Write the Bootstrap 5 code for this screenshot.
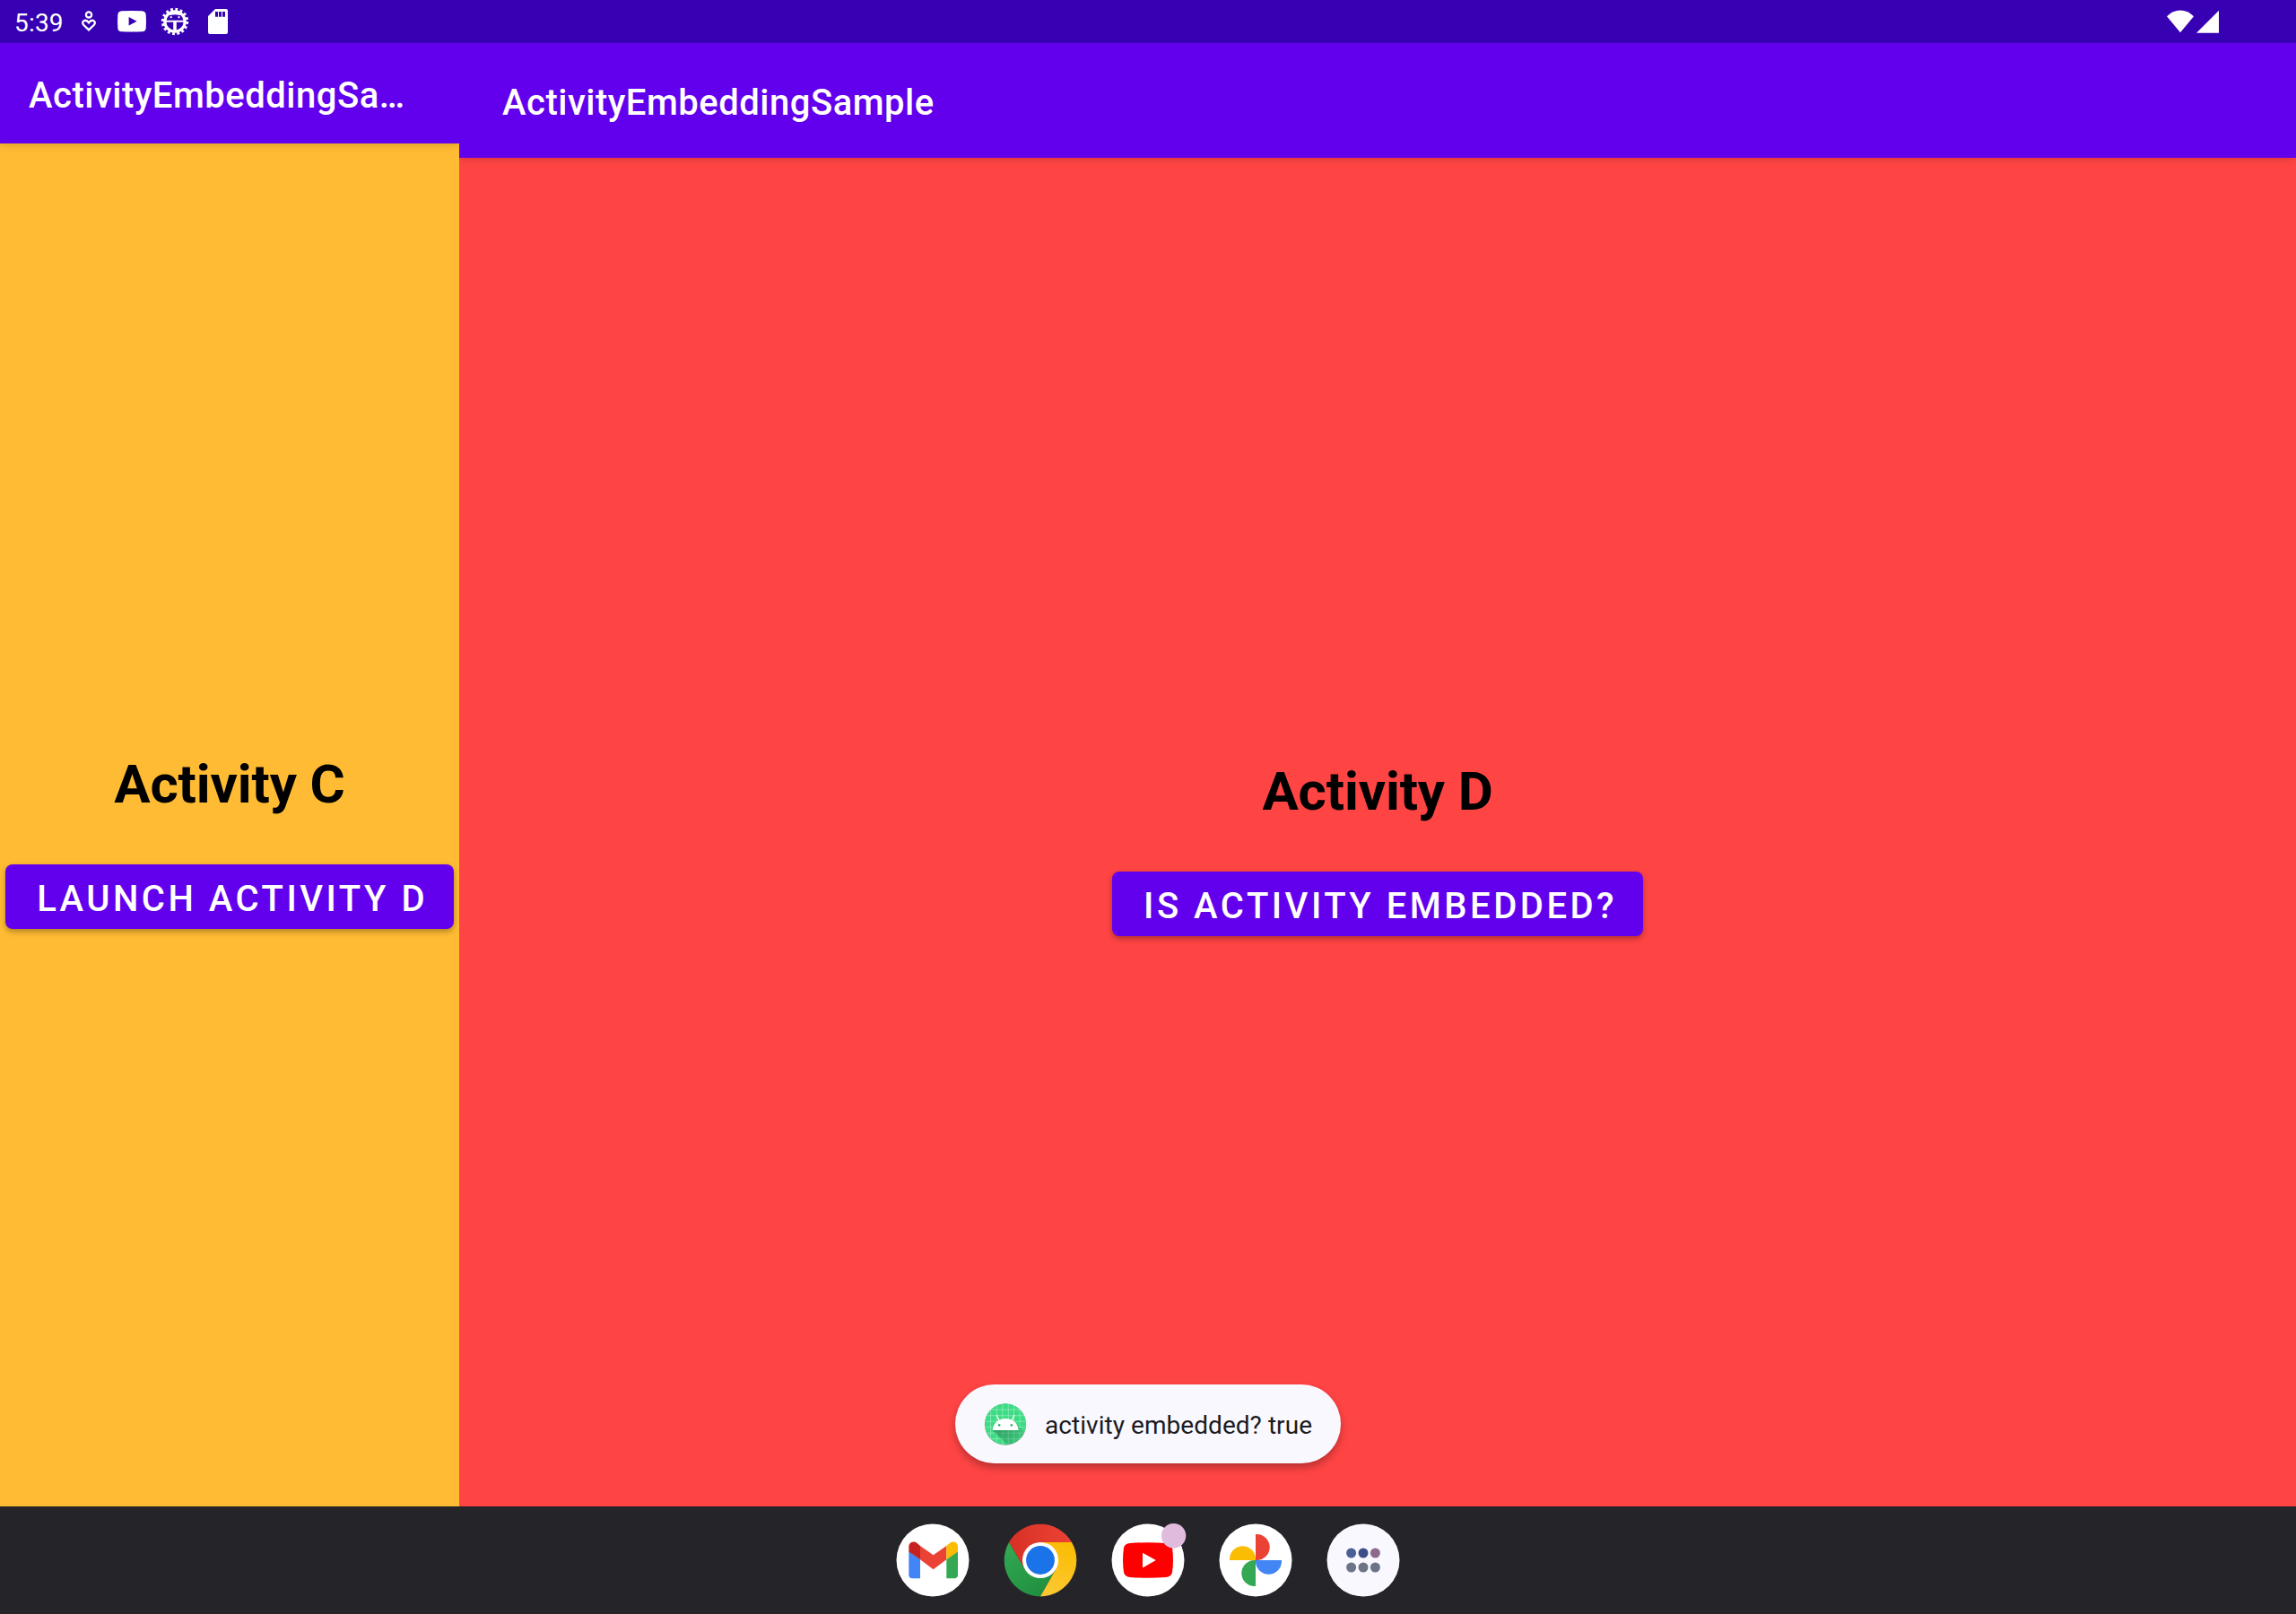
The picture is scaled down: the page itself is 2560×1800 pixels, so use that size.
<!DOCTYPE html>
<html lang="en">
<head>
<meta charset="utf-8">
<title>ActivityEmbeddingSample</title>
<meta name="viewport" content="width=device-width, initial-scale=1">
<link rel="stylesheet" href="https://cdn.jsdelivr.net/npm/bootstrap@5.3.0/dist/css/bootstrap.min.css">
<style>
body { font-family: Roboto, "Noto Sans", sans-serif; background: #252429; }
svg { display: block; flex: none; overflow: visible; }
.status-bar { height: 48px; background: #3700b3; padding: 0 86px 0 16px; color: #fff; }
.clock { width: 59px; font-size: 28px; line-height: 48px; padding-top: 3px; letter-spacing: .2px; }
.signal { margin-left: 3px; }
.pane-c { width: 512px; background: #ffbb33; }
.pane-d { background: #ff4444; }
.app-bar { background: #6200ee; color: #fff; box-shadow: 0 1px 9px rgba(0,0,0,.17); flex: none; }
.pane-c .app-bar { height: 112px; padding: 6px 32px 0; clip-path: inset(0 0 -20px 0); }
.pane-d .app-bar { height: 128px; padding: 6px 48px 0; clip-path: inset(0 0 -20px 0); }
.app-title { font-size: 40px; font-weight: 500; line-height: 48px; letter-spacing: .5px; white-space: nowrap; }
.activity-block { padding: 48px 0 12px; }
.activity-name { font-size: 60px; font-weight: 700; line-height: 70px; margin: 0 0 54px; color: #000; letter-spacing: -.13px; }
.btn-action { --bs-btn-color: #fff; --bs-btn-bg: #6200ee; --bs-btn-hover-color: #fff; --bs-btn-hover-bg: #6200ee;
  --bs-btn-font-weight: 500; --bs-btn-font-size: 40px; --bs-btn-line-height: 48px; --bs-btn-border-width: 0;
  --bs-btn-border-radius: 8px;
  height: 72px; padding: 15px 29px 9px 35.2px; letter-spacing: 3.5px; white-space: nowrap;
  box-shadow: 0 3px 6px rgba(0,0,0,.3); }
.toast-pill { left: 50%; bottom: 168px; width: 430px; height: 88px; margin-left: -215px; padding: 0 32px 0 33px; gap: 20px;
  background: #faf8ff; color: #1b1b21; font-size: 28px; line-height: 34px; letter-spacing: .05px; box-shadow: 0 5px 8px rgba(0,0,0,.27); white-space: nowrap; }
.toast-label { padding-top: 4px; }
.dock { height: 120px; gap: 40px; background: #252429; }
</style>
<script src="https://cdn.jsdelivr.net/npm/bootstrap@5.3.0/dist/js/bootstrap.bundle.min.js"></script>
</head>
<body>
<div class="position-relative vw-100 vh-100 d-flex flex-column overflow-hidden">

  <header class="status-bar d-flex align-items-center">
    <div class="clock">5:39</div>
    <svg width="48" height="48" viewBox="0 0 48 48" fill="none" stroke="#fff" stroke-width="2.3"><circle cx="24" cy="16.4" r="3.1"/><path d="M24 33.4L18.4 28C14.6 23.6 20.5 20.4 24 25.3C27.5 20.4 33.4 23.6 29.6 28Z"/></svg>
    <svg width="48" height="48" viewBox="0 0 48 48"><path fill="#fff" fill-rule="evenodd" d="M12.500 12.300Q24 11.700 35.500 12.300Q39.400 12.600 39.700 16.500Q40.200 24 39.700 31.500Q39.400 35 35.500 35.300Q24 35.900 12.500 35.300Q8.600 35 8.300 31.500Q7.800 24 8.300 16.500Q8.600 12.600 12.500 12.300ZM20.600 19V28.500L29.600 23.800Z"/></svg>
    <svg width="48" height="48" viewBox="0 0 48 48" fill="none" stroke="#fff"><circle cx="24" cy="24" r="13.700" stroke-width="3" stroke-dasharray="2.800 2.581"/><circle cx="24" cy="24" r="11.200" stroke-width="3.200"/><path stroke-width="2" d="M14 23.700H34"/><path stroke-width="3.600" d="M24 24V35"/><path fill="#fff" stroke="none" d="M15 16L18 13H30L33 16L29 17Q24 15.500 19 17Z"/><g fill="#fff" stroke="none"><circle cx="19.700" cy="19.200" r="1.100"/><circle cx="28.500" cy="19.200" r="1.100"/></g></svg>
    <svg width="48" height="48" viewBox="0 0 48 48"><path fill="#fff" fill-rule="evenodd" d="M21 10H33Q35 10 35 12V36Q35 38 33 38H15Q13 38 13 36V18ZM21 13V18.700H24V13ZM25 13V18.700H28V13ZM29 13V18.700H32V13Z"/></svg>
    <svg class="ms-auto" width="30" height="48" viewBox="0 0 30 48"><path fill="#fff" d="M15 36.300L0 18.200Q6.400 11.400 15 11.400T30 18.200Z"/></svg>
    <svg class="signal" width="25" height="48" viewBox="0 0 25 48"><path fill="#fff" d="M0 36.700H25V11.800Z"/></svg>
  </header>

  <main class="d-flex flex-grow-1">
    <section class="pane-c d-flex flex-column flex-shrink-0">
      <div class="app-bar d-flex align-items-center"><div class="app-title">ActivityEmbeddingSa…</div></div>
      <div class="flex-grow-1 d-flex align-items-center justify-content-center">
        <div class="activity-block d-flex flex-column align-items-center">
          <h1 class="activity-name">Activity C</h1>
          <button type="button" class="btn btn-action">LAUNCH ACTIVITY D</button>
        </div>
      </div>
    </section>
    <section class="pane-d d-flex flex-column flex-grow-1">
      <div class="app-bar d-flex align-items-center"><div class="app-title">ActivityEmbeddingSample</div></div>
      <div class="flex-grow-1 d-flex align-items-center justify-content-center">
        <div class="activity-block d-flex flex-column align-items-center">
          <h1 class="activity-name">Activity D</h1>
          <button type="button" class="btn btn-action">IS ACTIVITY EMBEDDED?</button>
        </div>
      </div>
    </section>
  </main>

  <div class="toast-pill position-absolute d-flex align-items-center rounded-pill" role="status">
    <svg width="47" height="47" viewBox="0 0 47 47">
      <defs>
        <clipPath id="badgeClip"><circle cx="23" cy="23.300" r="23"/></clipPath>
        <linearGradient id="headShade" gradientUnits="userSpaceOnUse" x1="16" y1="29" x2="32" y2="46"><stop offset="0" stop-color="#1c6b46" stop-opacity=".5"/><stop offset="1" stop-color="#1c6b46" stop-opacity=".2"/></linearGradient>
      </defs>
      <circle cx="23" cy="23.600" r="23.200" fill="#9aa8a2"/>
      <g clip-path="url(#badgeClip)">
        <path fill="#3ddc84" d="M0 0H47V47H0Z"/>
        <path fill="none" stroke="#fff" stroke-opacity=".4" stroke-width=".8" d="M6.500 0V47M13.300 0V47M19.800 0V47M26.300 0V47M32.500 0V47M39 0V47M0 7.200H47M0 13.700H47M0 20.200H47M0 26.700H47M0 33.200H47M0 39.700H47"/>
        <path fill="url(#headShade)" d="M8.700 30L26 47H47V36.500L35.500 23Z"/>
      </g>
      <path fill="#fff" d="M8.700 30C9.500 22 15.500 17 23.200 17S37 22 37.700 30Z"/>
      <path fill="none" stroke="#fff" stroke-width="1.300" stroke-linecap="round" d="M16 19L13.400 13.500M30.300 19L32.800 13.500"/>
      <circle cx="16.200" cy="24.400" r="1.300" fill="#35ad6b"/><circle cx="29.800" cy="24.400" r="1.300" fill="#35ad6b"/>
    </svg>
    <span class="toast-label">activity embedded? true</span>
  </div>

  <footer class="dock d-flex align-items-center justify-content-center flex-shrink-0">
    <svg width="80" height="80" viewBox="0 0 80 80">
      <circle cx="40" cy="40" r="40.500" fill="#fff"/>
      <path fill="#4285f4" d="M13.300 30L26 39V60.300H17.300Q13.300 60.300 13.300 56.300Z"/>
      <path fill="#34a853" d="M68 30L55.300 39V60.300H64Q68 60.300 68 56.300Z"/>
      <path fill="#ea4335" d="M26 24L40.600 34.300L55.300 24V39.300L40.600 50.300L26 39.300Z"/>
      <path fill="#c5221f" d="M13.300 30.500V25C13.300 20 18.500 17.700 22.500 21L26 24V39.300Z"/>
      <path fill="#fbbc04" d="M68 30.500V25C68 20 62.800 17.700 58.800 21L55.300 24V39.300Z"/>
    </svg>
    <svg width="80" height="80" viewBox="0 0 80 80">
      <defs>
        <linearGradient id="chromeRed" x1="0" y1="0" x2="1" y2="0"><stop offset="0" stop-color="#d93025"/><stop offset="1" stop-color="#ea4335"/></linearGradient>
        <linearGradient id="chromeGreen" x1=".8" y1="1" x2=".1" y2="0"><stop offset="0" stop-color="#1e8e3e"/><stop offset="1" stop-color="#34a853"/></linearGradient>
        <linearGradient id="chromeYellow" x1=".3" y1="1" x2=".6" y2="0"><stop offset="0" stop-color="#fcc934"/><stop offset="1" stop-color="#fbbc04"/></linearGradient>
      </defs>
      <path fill="url(#chromeRed)" d="M5 20A40.400 40.400 0 0 1 75 20H40L22.700 50Z"/>
      <path fill="url(#chromeGreen)" d="M5 20A40.400 40.400 0 0 0 40 80.400L57.300 50L40 40L22.700 50Z"/>
      <path fill="url(#chromeYellow)" d="M75 20A40.400 40.400 0 0 1 40 80.400L57.300 50L40 20Z"/>
      <circle cx="40" cy="40" r="20" fill="#fff"/><circle cx="40" cy="40" r="15.900" fill="#1a73e8"/>
    </svg>
    <svg width="80" height="80" viewBox="0 0 80 80">
      <circle cx="40" cy="40" r="40.500" fill="#fff"/>
      <path fill="#f00" d="M20 21Q40 19.500 60 21Q66 21.500 67 26Q69 40 67 53.500Q66 58.500 60 58.900Q40 60.400 20 58.900Q14 58.500 13 53.500Q11 40 13 26Q14 21.500 20 21Z"/>
      <path fill="#fff" d="M34 31.700V48.500L48.800 40.100Z"/>
      <circle cx="68.600" cy="12.700" r="13.700" fill="#e0bbdd"/>
    </svg>
    <svg width="80" height="80" viewBox="0 0 80 80">
      <circle cx="40" cy="40" r="40.500" fill="#fff"/>
      <path fill="#ea4335" d="M40 11H41.200A14.500 14.500 0 0 1 41.200 40H40Z"/>
      <path fill="#4285f4" d="M69 40V41.200A14.500 14.500 0 0 1 40 41.200V40Z"/>
      <path fill="#34a853" d="M40 69H38.800A14.500 14.500 0 0 1 38.800 40H40Z"/>
      <path fill="#fbbc04" d="M11 40V38.800A14.500 14.500 0 0 1 40 38.800V40Z"/>
    </svg>
    <svg width="80" height="80" viewBox="0 0 80 80">
      <circle cx="40" cy="40" r="40.500" fill="#faf8ff"/>
      <circle cx="26.600" cy="32" r="5.500" fill="#4a5f96"/><circle cx="40" cy="32" r="5.500" fill="#3b5088"/><circle cx="53.400" cy="32" r="5.500" fill="#8e6a8a"/>
      <g fill="#6d7488"><circle cx="26.600" cy="48" r="5.500"/><circle cx="40" cy="48" r="5.500"/><circle cx="53.400" cy="48" r="5.500"/></g>
    </svg>
  </footer>
</div>
</body>
</html>
